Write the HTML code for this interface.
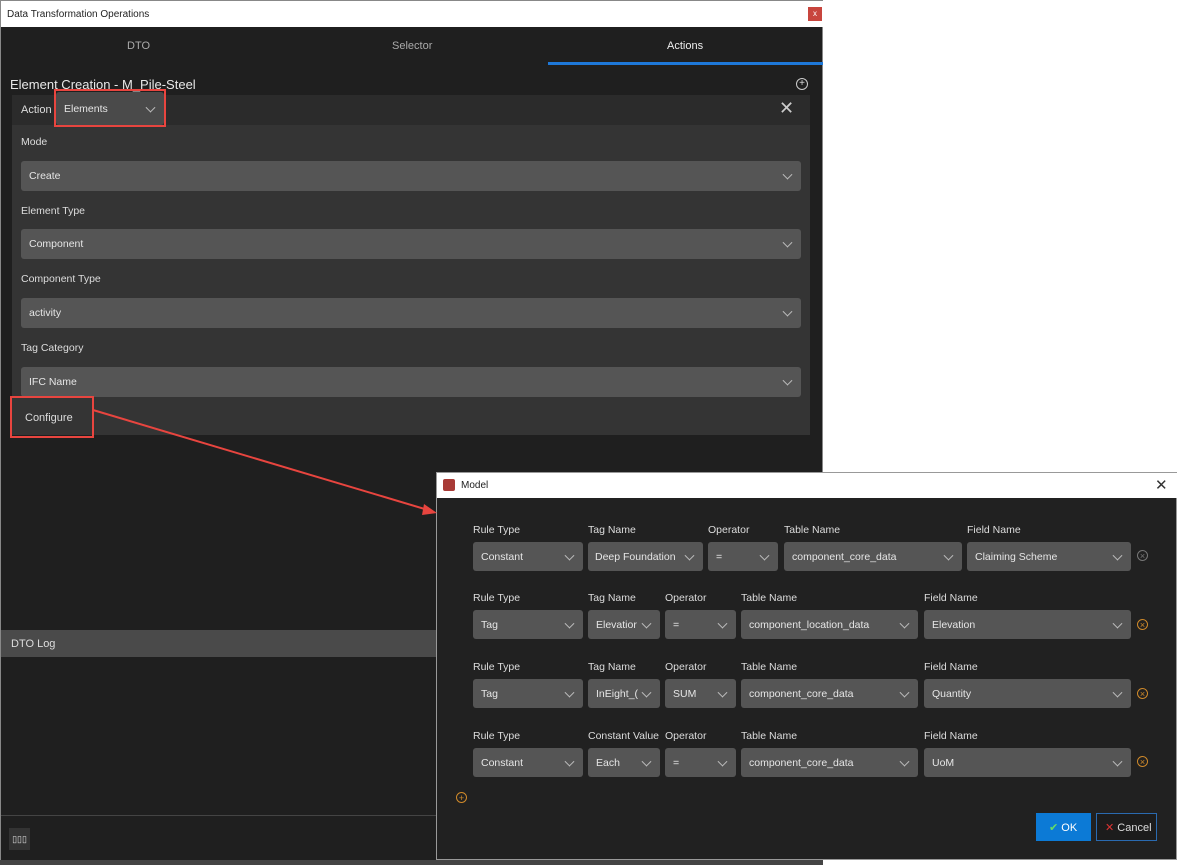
<!DOCTYPE html><html><head><style>
body{margin:0;width:1177px;height:865px;background:#fff;position:relative;overflow:hidden;font-family:"Liberation Sans",sans-serif;font-size:11px;color:#ddd}
.a{position:absolute;box-sizing:border-box}
.dd{position:absolute;box-sizing:border-box;background:#555;border-radius:3px;padding-left:8px;color:#e6e6e6;font-size:10.5px;display:flex;align-items:center}
.dd:after{content:"";position:absolute;right:10px;top:50%;width:6px;height:6px;border-right:1px solid #bbb;border-bottom:1px solid #bbb;transform:translateY(-70%) rotate(45deg)}
.lb{position:absolute;font-size:10.5px;color:#ddd}
.x{position:absolute;width:11px;height:11px;border-radius:50%;border:1px solid #d08a2a;color:#d08a2a;font-size:9px;line-height:10px;text-align:center;box-sizing:border-box}
</style></head><body>
<div class="a" style="left:0;top:0;width:823px;height:865px;background:#1f1f1f;border:1px solid #888"></div>
<div class="a" style="left:1px;top:1px;width:822px;height:26px;background:#fff;color:#222;font-size:10px;padding:8px 0 0 6px">Data Transformation Operations</div>
<div class="a" style="left:808px;top:7px;width:14px;height:14px;background:#c8453d;color:#fff;font-size:8px;text-align:center;line-height:14px">x</div>
<div class="a" style="left:127px;top:40px;color:#aaa">DTO</div>
<div class="a" style="left:392px;top:40px;color:#aaa">Selector</div>
<div class="a" style="left:667px;top:40px;color:#eee">Actions</div>
<div class="a" style="left:548px;top:62px;width:275px;height:3px;background:#1e78d8"></div>
<div class="a" style="left:10px;top:77px;font-size:13px;color:#e8e8e8">Element Creation - M_Pile-Steel</div>
<div class="a" style="left:796px;top:78px;width:12px;height:12px;border:1px solid #ccc;border-radius:50%;font-size:10px;line-height:10px;text-align:center">+</div>
<div class="a" style="left:12px;top:95px;width:798px;height:340px;background:#343434"></div>
<div class="a" style="left:12px;top:95px;width:798px;height:30px;background:#2b2b2b"></div>
<div class="a" style="left:21px;top:104px">Action</div>
<div class="dd" style="left:56px;top:92px;width:108px;height:33px;background:#4a4a4a">Elements</div>
<div class="a" style="left:54px;top:89px;width:112px;height:38px;border:2px solid #e8453f"></div>
<div class="a" style="left:779px;top:98px;font-size:18px;color:#ccc">✕</div>
<div class="lb" style="left:21px;top:136px">Mode</div><div class="dd" style="left:21px;top:161px;width:780px;height:30px">Create</div>
<div class="lb" style="left:21px;top:205px">Element Type</div><div class="dd" style="left:21px;top:229px;width:780px;height:30px">Component</div>
<div class="lb" style="left:21px;top:273px">Component Type</div><div class="dd" style="left:21px;top:298px;width:780px;height:30px">activity</div>
<div class="lb" style="left:21px;top:342px">Tag Category</div><div class="dd" style="left:21px;top:367px;width:780px;height:30px">IFC Name</div>
<div class="a" style="left:25px;top:412px">Configure</div>
<div class="a" style="left:10px;top:396px;width:84px;height:42px;border:2px solid #e8453f"></div>
<div class="a" style="left:1px;top:630px;width:822px;height:27px;background:#4a4a4a;padding:8px 0 0 10px">DTO Log</div>
<div class="a" style="left:1px;top:815px;width:822px;height:1px;background:#444"></div>
<div class="a" style="left:9px;top:828px;width:21px;height:22px;background:#333;font-size:9px;text-align:center;line-height:22px">▯▯▯</div>
<div class="a" style="left:0;top:860px;width:823px;height:5px;background:#444"></div>
<!-- Model dialog -->
<div class="a" style="left:436px;top:472px;width:741px;height:388px;background:#212121;border:1px solid #999"></div>
<div class="a" style="left:437px;top:473px;width:740px;height:25px;background:#fff;color:#222;font-size:10px;padding:7px 0 0 24px">Model</div>
<div class="a" style="left:443px;top:479px;width:12px;height:12px;background:#a83a36;border-radius:2px"></div>
<div class="a" style="left:1155px;top:476px;font-size:15px;color:#333">✕</div>

<div class="lb" style="left:473px;top:524px">Rule Type</div><div class="lb" style="left:588px;top:524px">Tag Name</div><div class="lb" style="left:708px;top:524px">Operator</div><div class="lb" style="left:784px;top:524px">Table Name</div><div class="lb" style="left:967px;top:524px">Field Name</div>
<div class="dd" style="left:473px;top:542px;width:110px;height:29px">Constant</div><div class="dd" style="left:588px;top:542px;width:115px;height:29px;padding-left:7px">Deep Foundation</div><div class="dd" style="left:708px;top:542px;width:70px;height:29px">=</div><div class="dd" style="left:784px;top:542px;width:178px;height:29px">component_core_data</div><div class="dd" style="left:967px;top:542px;width:164px;height:29px">Claiming Scheme</div>
<div class="x" style="left:1137px;top:550px;border-color:#777;color:#777">×</div>

<div class="lb" style="left:473px;top:592px">Rule Type</div><div class="lb" style="left:588px;top:592px">Tag Name</div><div class="lb" style="left:665px;top:592px">Operator</div><div class="lb" style="left:741px;top:592px">Table Name</div><div class="lb" style="left:924px;top:592px">Field Name</div>
<div class="dd" style="left:473px;top:610px;width:110px;height:29px">Tag</div><div class="dd" style="left:588px;top:610px;width:72px;height:29px">Elevatior</div><div class="dd" style="left:665px;top:610px;width:71px;height:29px">=</div><div class="dd" style="left:741px;top:610px;width:177px;height:29px">component_location_data</div><div class="dd" style="left:924px;top:610px;width:207px;height:29px">Elevation</div>
<div class="x" style="left:1137px;top:619px">×</div>

<div class="lb" style="left:473px;top:661px">Rule Type</div><div class="lb" style="left:588px;top:661px">Tag Name</div><div class="lb" style="left:665px;top:661px">Operator</div><div class="lb" style="left:741px;top:661px">Table Name</div><div class="lb" style="left:924px;top:661px">Field Name</div>
<div class="dd" style="left:473px;top:679px;width:110px;height:29px">Tag</div><div class="dd" style="left:588px;top:679px;width:72px;height:29px">InEight_(</div><div class="dd" style="left:665px;top:679px;width:71px;height:29px">SUM</div><div class="dd" style="left:741px;top:679px;width:177px;height:29px">component_core_data</div><div class="dd" style="left:924px;top:679px;width:207px;height:29px">Quantity</div>
<div class="x" style="left:1137px;top:688px">×</div>

<div class="lb" style="left:473px;top:730px">Rule Type</div><div class="lb" style="left:588px;top:730px">Constant Value</div><div class="lb" style="left:665px;top:730px">Operator</div><div class="lb" style="left:741px;top:730px">Table Name</div><div class="lb" style="left:924px;top:730px">Field Name</div>
<div class="dd" style="left:473px;top:748px;width:110px;height:29px">Constant</div><div class="dd" style="left:588px;top:748px;width:72px;height:29px">Each</div><div class="dd" style="left:665px;top:748px;width:71px;height:29px">=</div><div class="dd" style="left:741px;top:748px;width:177px;height:29px">component_core_data</div><div class="dd" style="left:924px;top:748px;width:207px;height:29px">UoM</div>
<div class="x" style="left:1137px;top:756px">×</div>
<div class="x" style="left:456px;top:792px">+</div>
<div class="a" style="left:1036px;top:813px;width:55px;height:28px;background:#0c7ad6;color:#fff;padding:8px 0 0 13px"><span style="color:#6d6">✔</span> OK</div>
<div class="a" style="left:1096px;top:813px;width:61px;height:28px;background:#1c1c1c;border:1px solid #2a6ab0;color:#ddd;padding:7px 0 0 8px"><span style="color:#d33">✕</span> Cancel</div>
<svg class="a" style="left:0;top:0" width="1177" height="865"><line x1="93" y1="410" x2="428" y2="510" stroke="#e8453f" stroke-width="2"/><polygon points="437,513 424,504 422,515" fill="#e8453f"/></svg>
</body></html>
